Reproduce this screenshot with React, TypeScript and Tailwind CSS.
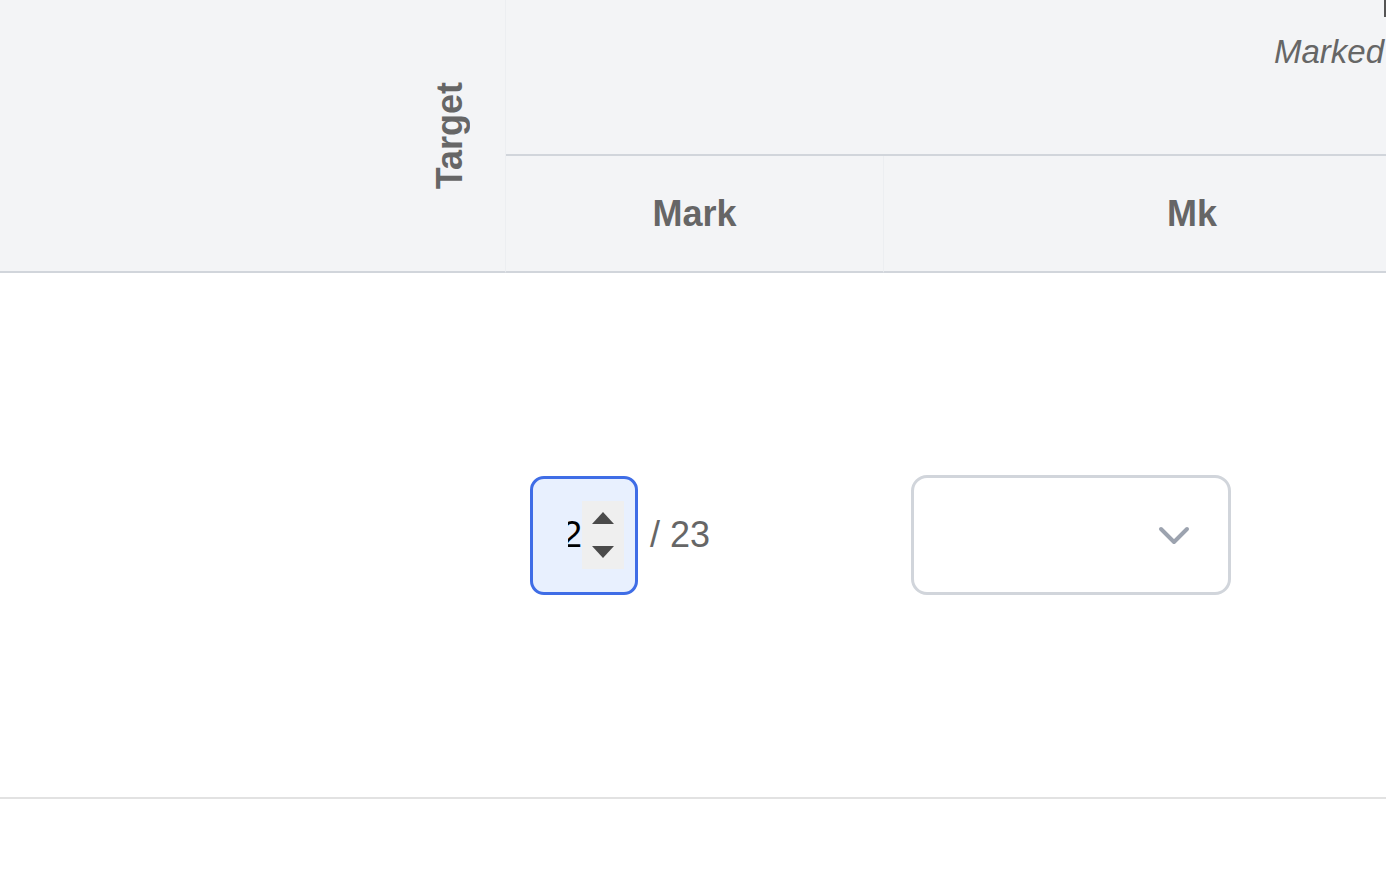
import React from "react";

const font = { fontFamily: '"Liberation Sans", Arial, sans-serif' };

const NumberField = () => (
  <div className="flex h-[119px] w-[108px] items-center justify-end rounded-[14px] border-[3px] border-[#3f6de6] bg-[#e8f0fe] pr-[11px]">
    <div className="flex h-[68px] items-center">
      <div className="w-[14px] overflow-hidden text-[36px] leading-none text-black">
        <span className="block -translate-x-[6px]">2</span>
      </div>
      <div className="flex h-[68px] w-[42px] flex-col items-center justify-center gap-[22px] bg-[#efefef]">
        <svg width="22" height="12" viewBox="0 0 22 12">
          <path d="M11 0 L22 12 L0 12 Z" fill="#4a4a4a" />
        </svg>
        <svg width="22" height="12" viewBox="0 0 22 12">
          <path d="M0 0 L22 0 L11 12 Z" fill="#4a4a4a" />
        </svg>
      </div>
    </div>
  </div>
);

const SelectField = () => (
  <div className="flex h-[120px] w-[320px] items-center justify-end rounded-[16px] border-[3px] border-[#d1d5db] bg-white pr-[38px]">
    <svg width="32" height="20" viewBox="0 0 32 20" fill="none" className="mt-[2px]">
      <path d="M3 3 L16 16 L29 3" stroke="#9ca3af" strokeWidth="4" strokeLinecap="round" strokeLinejoin="round" />
    </svg>
  </div>
);

export default function App() {
  return (
    <div className="h-[892px] w-[1386px] overflow-hidden bg-white" style={font}>
      <div className="grid w-[1500px] grid-cols-[506px_378px_616px]">
        {/* header */}
        <div className="row-span-2 flex items-center justify-end border-b-2 border-r border-b-[#d1d5db] border-r-[#eceef1] bg-[#f3f4f6] pr-[28px]">
          <span className="rotate-180 text-[36px] font-bold text-[#666666] [writing-mode:vertical-rl]">Target</span>
        </div>
        <div className="relative col-span-2 h-[156px] border-b-2 border-[#d1d5db] bg-[#f3f4f6] pt-[27px]">
          <div className="absolute left-[878px] top-0 h-[17px] w-[2px] bg-[#555]" />
          <div className="pl-[768px] text-[33px] italic text-[#666666]">Marked</div>
        </div>
        <div className="flex h-[117px] items-center justify-center border-b-2 border-r border-b-[#d1d5db] border-r-[#eceef1] bg-[#f3f4f6]">
          <span className="text-[36px] font-bold text-[#666666]">Mark</span>
        </div>
        <div className="flex h-[117px] items-center justify-center border-b-2 border-[#d1d5db] bg-[#f3f4f6]">
          <span className="text-[36px] font-bold text-[#666666]">Mk</span>
        </div>

        {/* body row */}
        <div className="h-[526px] border-b-2 border-[#e2e2e2]" />
        <div className="flex items-center gap-[12px] border-b-2 border-[#e2e2e2] pl-[24px]">
          <NumberField />
          <span className="text-[36px] text-[#666666]">/ 23</span>
        </div>
        <div className="flex items-center border-b-2 border-[#e2e2e2] pl-[27px]">
          <SelectField />
        </div>
      </div>
    </div>
  );
}
